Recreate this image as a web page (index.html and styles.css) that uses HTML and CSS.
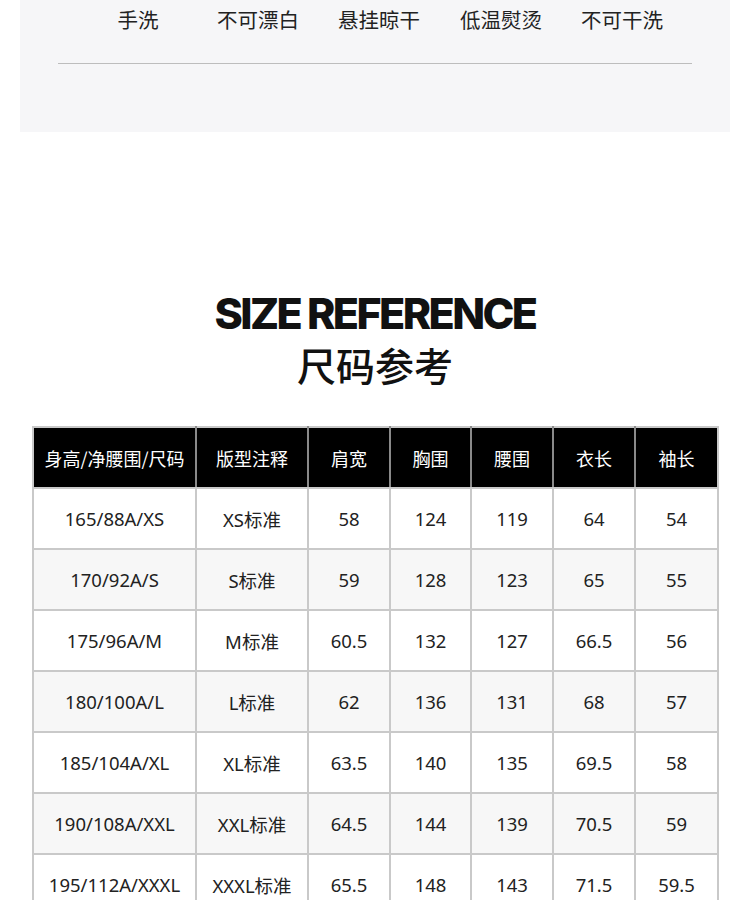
FILE: index.html
```html
<!DOCTYPE html>
<html lang="zh">
<head>
<meta charset="utf-8">
<link rel="stylesheet" href="styles.css">
</head>
<body>
<section class="care">
  <div class="care-labels">
    <span>手洗</span>
    <span>不可漂白</span>
    <span>悬挂晾干</span>
    <span>低温熨烫</span>
    <span>不可干洗</span>
  </div>
  <div class="care-rule"></div>
</section>

<header class="title">
  <h1 class="title-en">SIZE REFERENCE</h1>
  <h2 class="title-cn">尺码参考</h2>
</header>

<table class="size-table">
  <colgroup>
    <col class="c1"><col class="c2"><col class="c3"><col class="c4"><col class="c5"><col class="c6"><col class="c7">
  </colgroup>
  <thead>
    <tr><th>身高/净腰围/尺码</th><th>版型注释</th><th>肩宽</th><th>胸围</th><th>腰围</th><th>衣长</th><th>袖长</th></tr>
  </thead>
  <tbody>
    <tr><td>165/88A/XS</td><td>XS标准</td><td>58</td><td>124</td><td>119</td><td>64</td><td>54</td></tr>
    <tr><td>170/92A/S</td><td>S标准</td><td>59</td><td>128</td><td>123</td><td>65</td><td>55</td></tr>
    <tr><td>175/96A/M</td><td>M标准</td><td>60.5</td><td>132</td><td>127</td><td>66.5</td><td>56</td></tr>
    <tr><td>180/100A/L</td><td>L标准</td><td>62</td><td>136</td><td>131</td><td>68</td><td>57</td></tr>
    <tr><td>185/104A/XL</td><td>XL标准</td><td>63.5</td><td>140</td><td>135</td><td>69.5</td><td>58</td></tr>
    <tr><td>190/108A/XXL</td><td>XXL标准</td><td>64.5</td><td>144</td><td>139</td><td>70.5</td><td>59</td></tr>
    <tr><td>195/112A/XXXL</td><td>XXXL标准</td><td>65.5</td><td>148</td><td>143</td><td>71.5</td><td>59.5</td></tr>
  </tbody>
</table>
</body>
</html>
```

FILE: styles.css
```css
html, body {
  margin: 0;
  padding: 0;
  background: #ffffff;
}
body {
  font-family: "Noto Sans", "Noto Sans CJK SC", sans-serif;
  color: #222222;
  width: 750px;
  overflow: hidden;
}

.care {
  margin-left: 20px;
  width: 710px;
  height: 132px;
  background: #f6f6f8;
  box-sizing: border-box;
  padding-top: 5px;
}
.care-labels {
  display: grid;
  grid-template-columns: 120px 120px 122px 122px 120px;
  margin-left: 58px;
  font-family: "Noto Sans CJK SC", sans-serif;
  font-size: 20.5px;
  line-height: 28px;
  color: #222;
}
.care-labels span {
  text-align: center;
}
.care-rule {
  margin: 30px 0 0 38px;
  width: 634px;
  height: 1px;
  background: #bdbdbd;
}

.title {
  margin-top: 155px;
  text-align: center;
}
.title-en {
  margin: 0;
  font-family: "Inter", sans-serif;
  font-weight: 800;
  font-size: 43px;
  line-height: 52px;
  letter-spacing: -2.6px;
  color: #111;
}
.title-cn {
  margin: 0;
  font-family: "Noto Sans CJK SC", sans-serif;
  font-weight: 500;
  font-size: 39px;
  line-height: 50px;
  color: #111;
}

.size-table {
  margin: 37px 0 0 32px;
  border-collapse: collapse;
  table-layout: fixed;
  width: 685px;
  font-family: "Noto Sans", "Noto Sans CJK SC", sans-serif;
  font-size: 18.5px;
}
.c1 { width: 163px; }
.c2 { width: 112px; }
.c3 { width: 82px; }
.c4 { width: 81px; }
.c5 { width: 82px; }
.c6 { width: 82px; }
.c7 { width: 83px; }

.size-table th,
.size-table td {
  border: 2px solid #c9c9c9;
  height: 59px;
  padding: 0;
  text-align: center;
  vertical-align: middle;
  white-space: nowrap;
}
.size-table th {
  background: #000;
  color: #fff;
  font-weight: 400;
  font-size: 18px;
  font-family: "Noto Sans CJK SC", sans-serif;
  border-color: #8a8a8a;
  border-top-color: #c9c9c9;
}
.size-table thead th:first-child { border-left-color: #c9c9c9; }
.size-table thead th:last-child { border-right-color: #c9c9c9; }
.size-table thead th { border-bottom-color: #c9c9c9; }
.size-table td {
  color: #222;
}
.size-table tbody tr:nth-child(even) td {
  background: #f7f7f7;
}
```
